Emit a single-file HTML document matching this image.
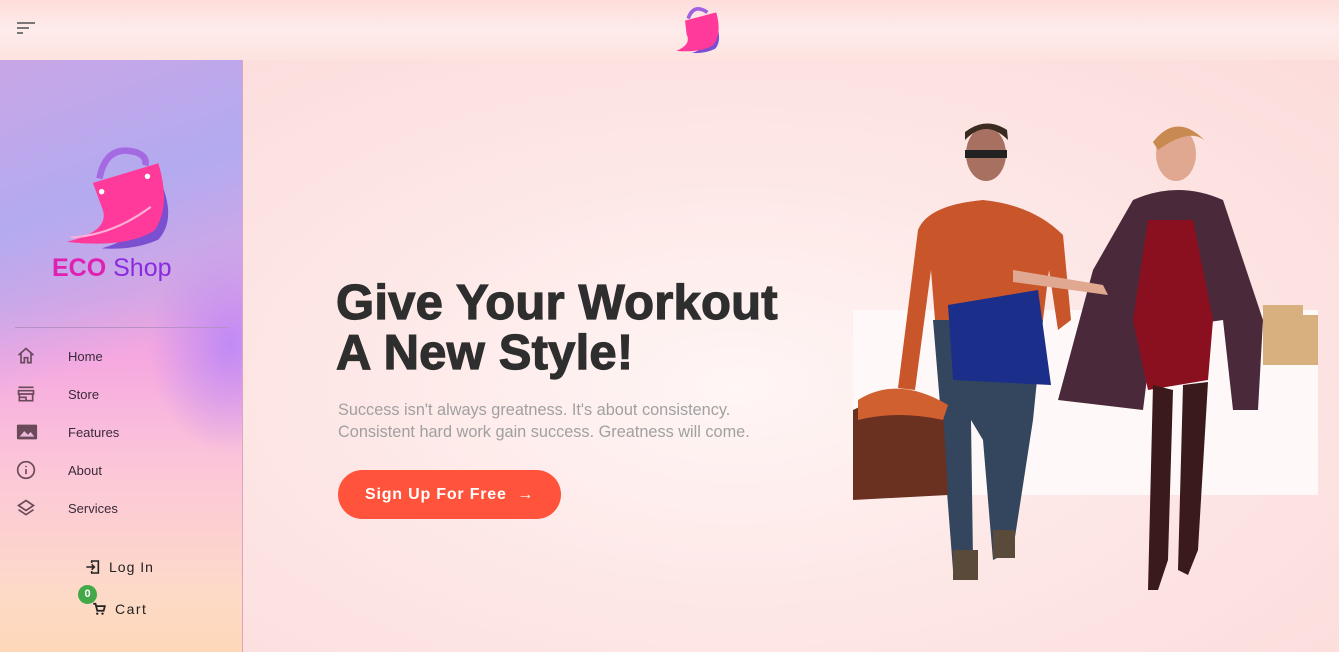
<!DOCTYPE html>
<html><head><meta charset="utf-8"><style>
*{margin:0;padding:0;box-sizing:border-box}
body{width:1339px;height:652px;overflow:hidden;font-family:"Liberation Sans",sans-serif;background:#fde0df;position:relative}
.top{position:absolute;left:0;top:0;width:1339px;height:60px;background:linear-gradient(#fdddda,#fdeceb 50%,#fde3e0)}
.main{position:absolute;left:243px;top:60px;width:1096px;height:592px;background:radial-gradient(ellipse at 45% 55%,#fff6f5 0%,#fde8e7 45%,#fcdcdb 100%)}
.side{position:absolute;left:0;top:60px;width:243px;height:592px;border-right:1px solid #d9a6c0;
background:linear-gradient(160deg,#c8a6e6 0%,#b4aaf0 25%,rgba(0,0,0,0) 50%),radial-gradient(ellipse at 95% 48%,#c08af5 0%,rgba(0,0,0,0) 25%),linear-gradient(180deg,#c8a8e8 0%,#e3a4e0 40%,#f5a8e0 50%,#fcc8d8 70%,#fddac8 90%,#fed8b8 100%)}
.nav{position:absolute;left:0;font-size:13px;color:#3a2a3a}
.nav svg{position:absolute;left:16px;top:-3px}
.nav span{position:absolute;left:68px;top:0}
h1{position:absolute;left:336px;top:278px;font-size:49px;line-height:50px;font-weight:700;color:#2e2e2e;letter-spacing:0.2px;-webkit-text-stroke:1.2px #2e2e2e}
p.sub{position:absolute;left:338px;top:399px;font-size:16.3px;line-height:22px;color:#a0a0a0}
.btn{position:absolute;left:338px;top:470px;width:223px;height:49px;border-radius:25px;background:#ff533b;color:#fff;font-weight:700;font-size:16px;line-height:49px;text-align:center;letter-spacing:0.8px}
</style></head><body>
<div class="top"></div>
<svg style="position:absolute;left:17px;top:21px" width="20" height="14"><rect x="0" y="1" width="18" height="2" fill="#777"/><rect x="0" y="6" width="12" height="2" fill="#777"/><rect x="0" y="11" width="6" height="2" fill="#777"/></svg>
<svg style="position:absolute;left:668px;top:3px" width="58" height="52" viewBox="0 0 110 100">
<path d="M38 30 Q48 0 75 18" stroke="#a060e0" stroke-width="7" fill="none"/>
<path d="M88 30 Q106 70 90 88 Q70 98 45 96 Q85 85 88 30Z" fill="#7a4fd0"/>
<path d="M32 34 L92 18 Q104 60 85 82 Q60 96 15 92 Q45 80 35 60 Z" fill="#ff3a9a"/></svg>
<div class="side"></div>
<svg style="position:absolute;left:58px;top:140px" width="120" height="112" viewBox="0 0 110 100">
<path d="M38 34 Q44 2 72 10 Q82 14 80 22" stroke="#a46ae2" stroke-width="6" fill="none"/>
<path d="M92 32 Q110 70 92 90 Q70 100 40 98 Q88 85 92 32Z" fill="#7a4fd0"/>
<path d="M32 38 L92 20 Q104 60 88 82 Q62 98 8 92 Q50 82 40 60 Z" fill="#ff3a9a"/>
<path d="M12 88 Q50 86 85 60" stroke="#ffb0d8" stroke-width="2" fill="none"/>
<circle cx="40" cy="46" r="2.5" fill="#fff"/><circle cx="82" cy="32" r="2.5" fill="#fff"/></svg>
<div style="position:absolute;left:52px;top:254px;font-size:25px;font-weight:700;color:#e020b0">ECO <span style="color:#8a2ae0;font-weight:400">Shop</span></div>
<div style="position:absolute;left:15px;top:327px;width:213px;height:1px;background:#b890c8"></div>
<div class="nav" style="top:349px"><svg width="20" height="20" viewBox="0 0 24 24"><path d="M3 11L12 3l9 8M6 9v11h4v-6h4v6h4V9" stroke="#6a4a5a" stroke-width="2" fill="none"/></svg><span>Home</span></div>
<div class="nav" style="top:387px"><svg width="20" height="20" viewBox="0 0 24 24"><path d="M3 4h18M3 8h18v4H3zM4 12v8h16v-8M4 16h8v4" stroke="#6a4a5a" stroke-width="2" fill="none"/></svg><span>Store</span></div>
<div class="nav" style="top:425px"><svg width="22" height="20" viewBox="0 0 24 20"><rect x="1" y="2" width="22" height="16" rx="1" fill="#6a4a5a"/><path d="M4 15l5-6 4 4 3-3 4 5z" fill="#e8b8d8"/></svg><span>Features</span></div>
<div class="nav" style="top:463px"><svg width="20" height="20" viewBox="0 0 24 24"><circle cx="12" cy="12" r="10" stroke="#6a4a5a" stroke-width="2" fill="none"/><path d="M12 11v6M12 7v1.5" stroke="#6a4a5a" stroke-width="2"/></svg><span>About</span></div>
<div class="nav" style="top:501px"><svg width="20" height="20" viewBox="0 0 24 24"><path d="M12 3l9 6-9 6-9-6zM3 14l9 6 9-6" stroke="#6a4a5a" stroke-width="2" fill="none"/></svg><span>Services</span></div>
<svg style="position:absolute;left:85px;top:559px" width="16" height="16" viewBox="0 0 24 24"><path d="M10 6v-3h10v18H10v-3M2 12h12M10 8l4 4-4 4" stroke="#222" stroke-width="2.4" fill="none"/></svg>
<div style="position:absolute;left:109px;top:559px;font-size:14px;letter-spacing:1px;color:#222">Log In</div>
<div style="position:absolute;left:78px;top:585px;width:19px;height:19px;border-radius:50%;background:#43a847;color:#fff;font-size:11px;font-weight:700;text-align:center;line-height:19px">0</div>
<svg style="position:absolute;left:92px;top:602px" width="14" height="14" viewBox="0 0 24 24"><path d="M2 3h4l3 12h11l2-8H7" stroke="#222" stroke-width="3" fill="none"/><circle cx="9" cy="20" r="2" fill="#222"/><circle cx="18" cy="20" r="2" fill="#222"/></svg>
<div style="position:absolute;left:115px;top:601px;font-size:14px;letter-spacing:1.5px;color:#222">Cart</div>
<div class="main"></div>
<h1>Give Your Workout<br>A New Style!</h1>
<p class="sub">Success isn't always greatness. It's about consistency.<br>Consistent hard work gain success. Greatness will come.</p>
<div class="btn">Sign Up For Free &nbsp;→</div>
<svg style="position:absolute;left:853px;top:120px" width="470" height="475" viewBox="0 0 470 475">
<rect x="0" y="190" width="465" height="185" fill="#fff8f8"/>
<ellipse cx="133" cy="34" rx="20" ry="27" fill="#a87060"/><path d="M112 20 Q133 -2 155 20 L154 10 Q133 -4 112 12Z" fill="#3a2a20"/>
<rect x="112" y="30" width="42" height="8" fill="#222"/>
<path d="M65 110 Q75 85 130 80 Q180 85 210 115 L218 200 L205 210 L196 150 L190 200 L82 200 L78 150 L62 270 L45 268 Z" fill="#c8562a"/>
<path d="M80 200 L190 200 L180 300 L160 430 L140 440 L130 320 L118 300 L120 440 L100 450 L90 320 Z" fill="#34465e"/>
<path d="M100 430h25v30h-25zM140 410h22v28h-22z" fill="#5a4a3a"/>
<path d="M0 290 Q40 270 90 290 L95 375 L0 380Z" fill="#6a3020"/><path d="M5 280 Q45 255 95 285 L90 300 Q45 290 5 300Z" fill="#d06030"/>
<path d="M95 185 L185 170 L198 265 L100 260 Z" fill="#1a2e8a"/>
<ellipse cx="323" cy="34" rx="20" ry="27" fill="#e0a890"/><path d="M300 22 Q325 -10 355 24 Q340 5 305 30Z" fill="#c88a50"/>
<path d="M280 80 Q325 60 370 80 L410 200 L405 290 L380 290 L370 200 L300 210 L290 290 L205 280 L240 150 Z" fill="#4a2a3a"/>
<path d="M295 100 L340 100 L360 200 L355 260 L295 270 L280 200 Z" fill="#8a1020"/>
<path d="M160 150 L250 165 L255 175 L160 162Z" fill="#e0a890"/>
<path d="M300 265 L320 270 L315 440 L305 470 L295 470Z M330 265 L355 262 L345 430 L335 455 L325 450Z" fill="#3a1a1a"/>
<path d="M410 185h40v60h-40zM430 195h35v50h-35z" fill="#d8b080"/>
</svg>
</body></html>
